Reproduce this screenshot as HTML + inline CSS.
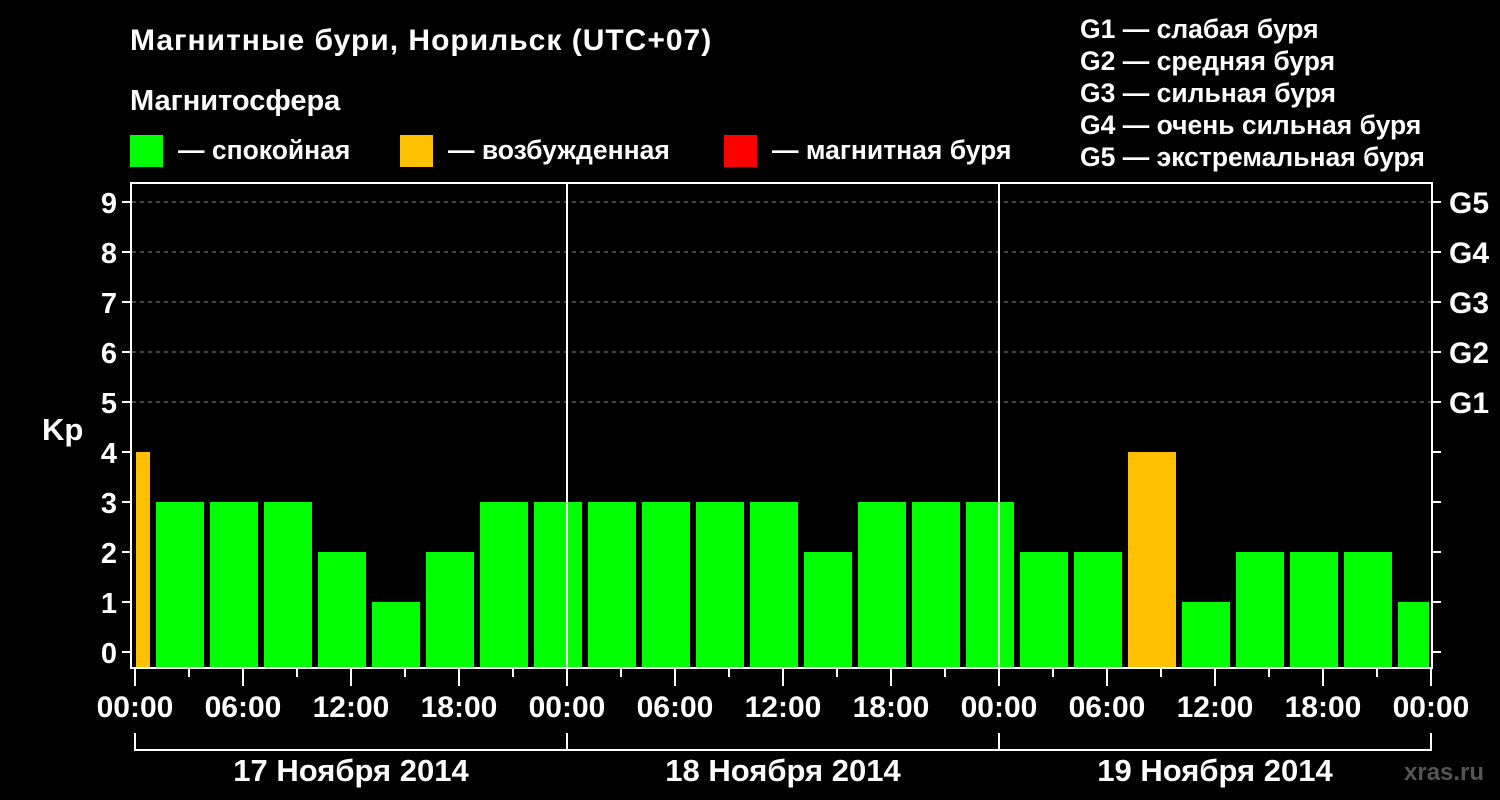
<!DOCTYPE html><html><head><meta charset="utf-8"><style>body{margin:0;background:#000}svg{display:block}text{font-family:"Liberation Sans",sans-serif;font-weight:bold;fill:#fff}</style></head><body>
<svg width="1500" height="800" viewBox="0 0 1500 800" xmlns="http://www.w3.org/2000/svg">
<rect width="1500" height="800" fill="#000"/>
<text x="130" y="50" font-size="30" letter-spacing="1">Магнитные бури, Норильск (UTC+07)</text>
<text x="130" y="110" font-size="29">Магнитосфера</text>
<rect x="130" y="135" width="33" height="32" fill="#00ff00"/>
<text x="178" y="159" font-size="26.5">— спокойная</text>
<rect x="400" y="135" width="33" height="32" fill="#ffc000"/>
<text x="448" y="159" font-size="26.5">— возбужденная</text>
<rect x="724" y="135" width="33" height="32" fill="#ff0000"/>
<text x="772" y="159" font-size="26.5">— магнитная буря</text>
<g font-size="26.5">
<text x="1080" y="38">G1 — слабая буря</text>
<text x="1080" y="70">G2 — средняя буря</text>
<text x="1080" y="102">G3 — сильная буря</text>
<text x="1080" y="134">G4 — очень сильная буря</text>
<text x="1080" y="166">G5 — экстремальная буря</text>
</g>
<g stroke="#888" stroke-dasharray="4,4" stroke-width="1">
<line x1="132" y1="202" x2="1432" y2="202"/><line x1="132" y1="252" x2="1432" y2="252"/><line x1="132" y1="302" x2="1432" y2="302"/><line x1="132" y1="352" x2="1432" y2="352"/><line x1="132" y1="402" x2="1432" y2="402"/>
</g>
<g id="bars">
<rect x="136" y="452" width="14" height="216" fill="#ffc000"/>
</g>
<script>
var v=[3,3,3,2,1,2,3,3,3,3,3,3,2,3,3,3,2,2,4,1,2,2,2,1];var g=document.getElementById('bars');
v.forEach(function(k,i){var x=156+54*i,w=48;if(x+w>1429)w=1429-x;var r=document.createElementNS('http://www.w3.org/2000/svg','rect');r.setAttribute('x',x);r.setAttribute('y',652-50*k);r.setAttribute('width',w);r.setAttribute('height',16+50*k);r.setAttribute('fill',k>=4?'#ffc000':'#00ff00');g.appendChild(r);});
</script>
<g stroke="#fff" stroke-width="2" fill="none">
<rect x="131" y="183" width="1301" height="485"/>
<line x1="567" y1="183" x2="567" y2="668"/><line x1="999" y1="183" x2="999" y2="668"/>
<path d="M122 652h9M122 602h9M122 552h9M122 502h9M122 452h9M122 402h9M122 352h9M122 302h9M122 252h9M122 202h9"/>
<path d="M1432 652h9M1432 602h9M1432 552h9M1432 502h9M1432 452h9M1432 402h9M1432 352h9M1432 302h9M1432 252h9M1432 202h9"/>
<path d="M135 668v18M243 668v18M351 668v18M459 668v18M567 668v18M675 668v18M783 668v18M891 668v18M999 668v18M1107 668v18M1215 668v18M1323 668v18M1431 668v18"/>
<path d="M189 668v9M297 668v9M405 668v9M513 668v9M621 668v9M729 668v9M837 668v9M945 668v9M1053 668v9M1161 668v9M1269 668v9M1377 668v9"/>
<path d="M135 733v17h1296v-17M567 733v17M999 733v17"/>
</g>
<g font-size="29" text-anchor="end">
<text x="117" y="663">0</text><text x="117" y="613">1</text><text x="117" y="563">2</text><text x="117" y="513">3</text><text x="117" y="463">4</text><text x="117" y="413">5</text><text x="117" y="363">6</text><text x="117" y="313">7</text><text x="117" y="263">8</text><text x="117" y="213">9</text>
</g>
<text x="42" y="440" font-size="31">Kp</text>
<g font-size="30">
<text x="1449" y="213">G5</text><text x="1449" y="263">G4</text><text x="1449" y="313">G3</text><text x="1449" y="363">G2</text><text x="1449" y="413">G1</text>
</g>
<g font-size="30" text-anchor="middle">
<text x="135" y="717">00:00</text><text x="243" y="717">06:00</text><text x="351" y="717">12:00</text><text x="459" y="717">18:00</text><text x="567" y="717">00:00</text><text x="675" y="717">06:00</text><text x="783" y="717">12:00</text><text x="891" y="717">18:00</text><text x="999" y="717">00:00</text><text x="1107" y="717">06:00</text><text x="1215" y="717">12:00</text><text x="1323" y="717">18:00</text><text x="1431" y="717">00:00</text>
<text x="351" y="781" font-size="31">17 Ноября 2014</text><text x="783" y="781" font-size="31">18 Ноября 2014</text><text x="1215" y="781" font-size="31">19 Ноября 2014</text>
</g>
<text x="1404" y="780" font-size="24" style="fill:#555">xras.ru</text>
</svg></body></html>
